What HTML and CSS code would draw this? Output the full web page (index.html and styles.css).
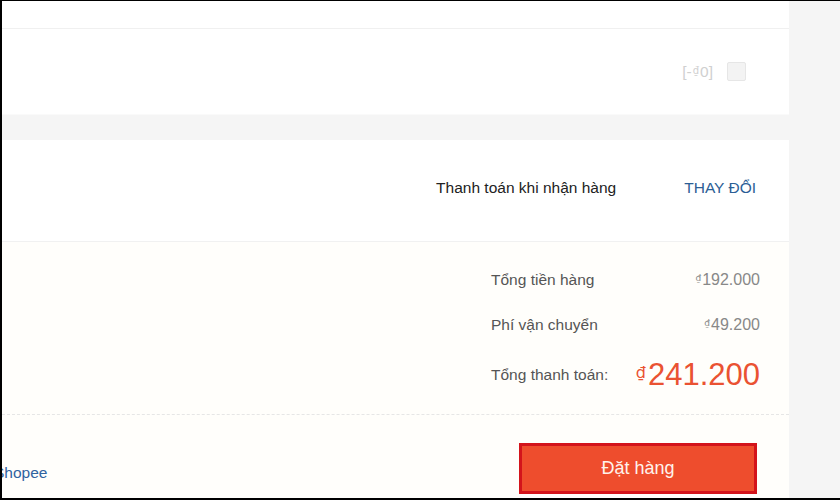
FILE: index.html
```html
<!DOCTYPE html>
<html lang="vi">

<head>
    <meta charset="UTF-8">
    <meta name="viewport" content="width=device-width, initial-scale=1.0">
    <title>Thanh toán</title>
    <link rel="stylesheet" href="styles.css">
</head>

<body>
    <main class="checkout">
        <div class="shop-strip"></div>

        <section class="coin-row">
            <span class="coin-value">[-<span class="currency">₫</span>0]</span>
            <span class="checkbox"></span>
        </section>

        <section class="payment-method">
            <span class="method-name">Thanh toán khi nhận hàng</span>
            <a class="change-link" href="#">THAY ĐỔI</a>
        </section>

        <section class="summary">
            <div class="summary-table">
                <div class="summary-label">Tổng tiền hàng</div>
                <div class="summary-value"><span class="currency">₫</span>192.000</div>

                <div class="summary-label">Phí vận chuyển</div>
                <div class="summary-value"><span class="currency">₫</span>49.200</div>

                <div class="summary-label">Tổng thanh toán:</div>
                <div class="summary-value total-value"><span class="currency">₫</span>241.200</div>
            </div>

            <div class="place-order">
                <p class="terms"><a href="#">Shopee</a></p>
                <button class="order-btn">Đặt hàng</button>
            </div>
        </section>
    </main>
</body>

</html>
```

FILE: styles.css
```css
* {
    box-sizing: border-box;
}

body {
    margin: 0;
    height: 500px;
    overflow: hidden;
    background-color: #f5f5f5;
    border-top: 1px solid #000;
    border-left: 2px solid #000;
    border-bottom: 2px solid #000;
    font-family: 'Liberation Sans', Arial, sans-serif;
    font-size: 15.5px;
    color: #222;
}

.checkout {
    width: 787px;
    height: 100%;
    display: flex;
    flex-direction: column;
}

.shop-strip {
    height: 28px;
    background-color: #fff;
    border-bottom: 1px solid #f0f0f0;
}

.coin-row {
    height: 86px;
    background-color: #fff;
    border-bottom: 1px solid #fafafa;
    display: flex;
    justify-content: flex-end;
    align-items: center;
    gap: 14px;
    padding-right: 43px;
    margin-bottom: 25px;
}

.coin-value {
    color: #d0d0d0;
}

.currency {
    font-family: 'DejaVu Sans', sans-serif;
}

.coin-value .currency {
    font-size: 10px;
    vertical-align: 3px;
    margin: 0 1px;
}

.checkbox {
    width: 19px;
    height: 19px;
    border: 1px solid #e6e6e6;
    border-radius: 2px;
    background-color: #f3f3f3;
}

.payment-method {
    height: 102px;
    background-color: #fff;
    border-bottom: 1px solid #f1f1f1;
    display: flex;
    justify-content: flex-end;
    align-items: center;
    gap: 68px;
    padding: 0 33px 5px 0;
}

.method-name {
    color: #222;
}

.change-link {
    color: #2c5e95;
    text-decoration: none;
}

.summary {
    flex: 1;
    background-color: #fffefb;
}

.summary-table {
    display: grid;
    grid-template-columns: 129px 140px;
    grid-template-rows: 45px 45px 56px;
    justify-content: end;
    align-items: center;
    padding: 15px 29px 11px 0;
    border-bottom: 1px dashed #e6e6e6;
}

.summary-label {
    color: #555;
}

.summary-value {
    text-align: right;
    font-size: 16px;
    color: #888;
}

.summary-value .currency {
    font-size: 9px;
    vertical-align: 4px;
    margin-right: 1px;
}

.total-value {
    display: flex;
    justify-content: flex-end;
    align-items: center;
    font-size: 31px;
    color: #ea5232;
}

.total-value .currency {
    font-size: 16px;
    align-self: flex-start;
    margin: 6px 2px 0 0;
}

.place-order {
    display: flex;
    justify-content: space-between;
    align-items: center;
    padding: 28px 32px 0 0;
}

.terms {
    margin: 9px 0 0 -8px;
}

.terms a {
    color: #2f63a0;
    text-decoration: none;
}

.order-btn {
    width: 238px;
    height: 51px;
    background-color: #ee4d2d;
    border: 3px solid #d3141b;
    color: #fff3ec;
    font-family: inherit;
    font-size: 18px;
    cursor: pointer;
}
```
